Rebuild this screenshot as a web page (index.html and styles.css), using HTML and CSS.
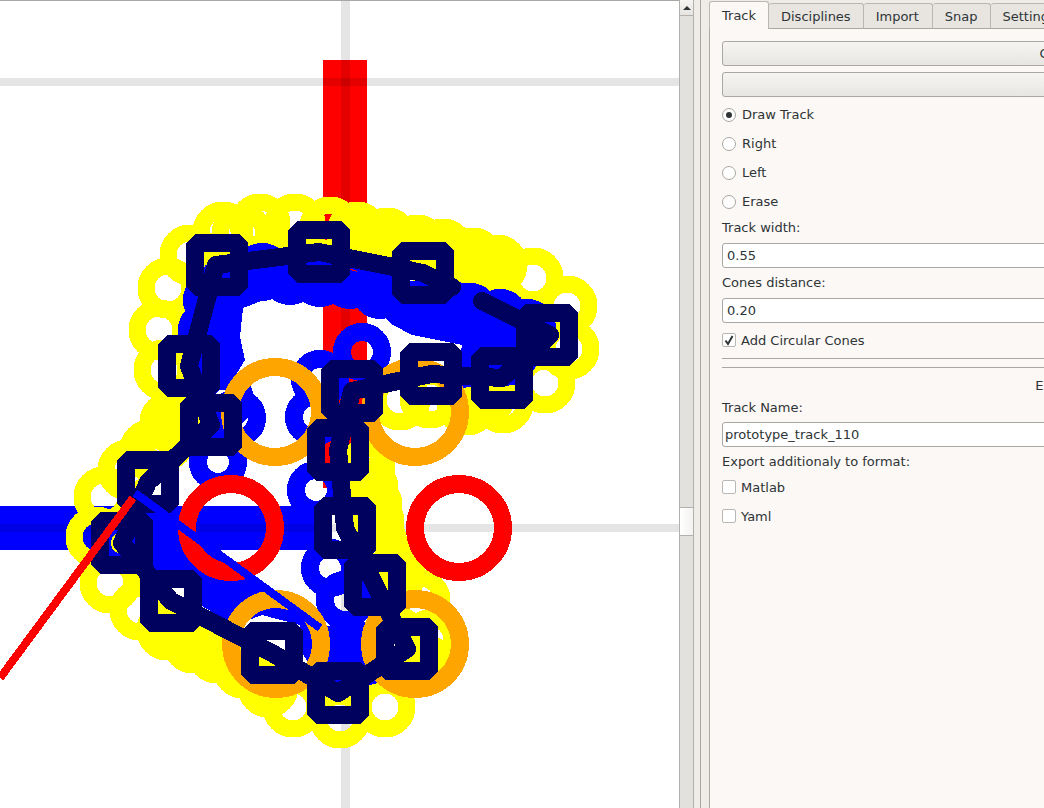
FILE: index.html
```html
<!doctype html>
<html lang="en">
<head>
    <meta charset="UTF-8">
    <meta name="viewport" content="width=device-width, initial-scale=1.0">
    <title>Track editor</title>
    <link rel="stylesheet" href="styles.css">
</head>
<body>
<div class="window">
    <div class="canvas">
        <svg class="track" width="679" height="807" viewBox="0 1 679 807">
            <rect class="start-red" x="323" y="60" width="44" height="428"/>
            <rect class="start-blue" x="-20" y="506" width="343" height="44"/>
            <g class="grid">
                <rect x="341" y="0" width="9" height="808"/>
                <rect x="0" y="78" width="679" height="8"/>
                <rect x="0" y="524" width="679" height="8"/>
            </g>
            <g class="rings yellow">
                <circle cx="190" cy="255" r="22"/>
                <circle cx="223" cy="232" r="22"/>
                <circle cx="242" cy="234" r="22"/>
                <circle cx="260" cy="224" r="22"/>
                <circle cx="295" cy="224" r="22"/>
                <circle cx="330" cy="227" r="22"/>
                <circle cx="357" cy="232" r="22"/>
                <circle cx="372" cy="243" r="22"/>
                <circle cx="387" cy="238" r="22"/>
                <circle cx="402" cy="249" r="22"/>
                <circle cx="417" cy="245" r="22"/>
                <circle cx="430" cy="255" r="22"/>
                <circle cx="443" cy="249" r="22"/>
                <circle cx="458" cy="262" r="22"/>
                <circle cx="473" cy="258" r="22"/>
                <circle cx="485" cy="270" r="22"/>
                <circle cx="497" cy="265" r="22"/>
                <circle cx="533" cy="278" r="22"/>
                <circle cx="567" cy="306" r="22"/>
                <circle cx="569" cy="349" r="22"/>
                <circle cx="545" cy="383" r="22"/>
                <circle cx="503" cy="403" r="22"/>
                <circle cx="485" cy="396" r="22"/>
                <circle cx="467" cy="405" r="22"/>
                <circle cx="430" cy="398" r="22"/>
                <circle cx="400" cy="400" r="22"/>
                <circle cx="365" cy="470" r="22"/>
                <circle cx="368" cy="488" r="22"/>
                <circle cx="372" cy="505" r="22"/>
                <circle cx="374" cy="522" r="22"/>
                <circle cx="376" cy="540" r="22"/>
                <circle cx="385" cy="558" r="22"/>
                <circle cx="395" cy="575" r="22"/>
                <circle cx="420" cy="600" r="22"/>
                <circle cx="430" cy="640" r="22"/>
                <circle cx="425" cy="665" r="22"/>
                <circle cx="385" cy="707" r="22"/>
                <circle cx="340" cy="718" r="22"/>
                <circle cx="293" cy="707" r="22"/>
                <circle cx="268" cy="687" r="22"/>
                <circle cx="255" cy="671" r="22"/>
                <circle cx="243" cy="668" r="22"/>
                <circle cx="230" cy="655" r="22"/>
                <circle cx="217" cy="653" r="22"/>
                <circle cx="205" cy="642" r="22"/>
                <circle cx="193" cy="643" r="22"/>
                <circle cx="180" cy="631" r="22"/>
                <circle cx="167" cy="630" r="22"/>
                <circle cx="140" cy="610" r="22"/>
                <circle cx="110" cy="583" r="22"/>
                <circle cx="96" cy="537" r="22"/>
                <circle cx="104" cy="497" r="22"/>
                <circle cx="128" cy="470" r="22"/>
                <circle cx="150" cy="450" r="22"/>
                <circle cx="165" cy="440" r="22"/>
                <circle cx="185" cy="425" r="22"/>
                <circle cx="170" cy="422" r="22"/>
                <circle cx="180" cy="410" r="22"/>
                <circle cx="164" cy="370" r="22"/>
                <circle cx="159" cy="330" r="22"/>
                <circle cx="168" cy="288" r="22"/>
            </g>
            <polygon class="blue-fill" points="250,256 273,250 350,270 393,281 453,280 487,290 513,297 535,305 550,330 535,368 520,385 455,388 462,345 412,335 393,325 385,318 367,310 330,298 277,295 243,308 240,337 245,360 227,390 200,390 185,337 188,313 196,297 205,265"/>
            <g class="rings blue">
                <circle cx="262" cy="272" r="20"/>
                <circle cx="290" cy="276" r="20"/>
                <circle cx="320" cy="278" r="20"/>
                <circle cx="350" cy="280" r="20"/>
                <circle cx="380" cy="290" r="20"/>
                <circle cx="470" cy="312" r="20"/>
                <circle cx="500" cy="318" r="20"/>
                <circle cx="527" cy="328" r="20"/>
                <circle cx="212" cy="300" r="20"/>
                <circle cx="207" cy="330" r="20"/>
                <circle cx="225" cy="400" r="20"/>
                <circle cx="362" cy="352" r="20"/>
                <circle cx="320" cy="379" r="20"/>
                <circle cx="314" cy="417" r="20"/>
                <circle cx="237" cy="418" r="20"/>
                <circle cx="218" cy="462" r="20"/>
                <circle cx="316" cy="490" r="20"/>
                <circle cx="330" cy="568" r="20"/>
                <circle cx="345" cy="600" r="20"/>
                <circle cx="122" cy="543" r="20"/>
            </g>
            <polygon class="blue-fill" points="153,510 190,540 270,590 320,628 352,620 378,625 378,660 390,680 350,690 320,680 300,650 300,625 262,615 235,625 200,605 190,570 153,570"/>
            <g class="rings orange">
                <circle cx="275" cy="412" r="45"/>
                <circle cx="415" cy="412" r="45"/>
                <circle cx="276" cy="644" r="45"/>
                <circle cx="415" cy="644" r="45"/>
            </g>
            <g class="rings red">
                <circle cx="231" cy="528" r="44"/>
                <circle cx="459" cy="528" r="44"/>
            </g>
            <g class="cones">
                <rect x="195" y="243" width="44" height="44"/>
                <rect x="297" y="230" width="44" height="44"/>
                <rect x="401" y="251" width="44" height="44"/>
                <rect x="525" y="313" width="44" height="44"/>
                <rect x="480" y="356" width="44" height="44"/>
                <rect x="409" y="352" width="44" height="44"/>
                <rect x="330" y="369" width="44" height="44"/>
                <rect x="316" y="428" width="44" height="44"/>
                <rect x="323" y="506" width="44" height="44"/>
                <rect x="353" y="563" width="44" height="44"/>
                <rect x="385" y="627" width="44" height="44"/>
                <rect x="316" y="671" width="44" height="44"/>
                <rect x="250" y="631" width="44" height="44"/>
                <rect x="149" y="579" width="44" height="44"/>
                <rect x="100" y="521" width="44" height="44"/>
                <rect x="126" y="460" width="44" height="44"/>
                <rect x="189" y="403" width="44" height="44"/>
                <rect x="167" y="344" width="44" height="44"/>
            </g>
            <polyline class="spline" points="189,366 216,265 319,252 423,273 452,287"/>
            <polyline class="spline" points="482,301 550,335 502,378 431,374 352,391 338,450 345,528 375,585 407,649 338,693 272,653 171,601 122,543 148,482 211,425 189,366"/>
            <line class="arrow-blue" x1="135" y1="493" x2="320" y2="628"/>
            <line class="arrow-red" x1="133" y1="498" x2="0" y2="678"/>
        </svg>
    </div>
    <div class="scrollbar">
        <div class="scroll-up"><span class="scroll-arrow"></span></div>
        <div class="scroll-thumb"></div>
    </div>
    <div class="gutter"></div>
    <div class="sidebar">
        <div class="tabs">
            <div class="tab active">Track</div>
            <div class="tab">Disciplines</div>
            <div class="tab">Import</div>
            <div class="tab">Snap</div>
            <div class="tab">Settings</div>
        </div>
        <div class="pane">
            <div class="button">Clear</div>
            <div class="button second"></div>
            <div class="option first"><span class="radio checked"></span>Draw Track</div>
            <div class="option"><span class="radio"></span>Right</div>
            <div class="option"><span class="radio"></span>Left</div>
            <div class="option"><span class="radio"></span>Erase</div>
            <div class="label width-label">Track width:</div>
            <div class="field">0.55</div>
            <div class="label">Cones distance:</div>
            <div class="field">0.20</div>
            <div class="check-row circular">
                <span class="checkbox">
                    <svg width="12" height="12" viewBox="0 0 12 12"><path class="tick" d="M2.5 6.5 L5 10 L9.5 2"/></svg>
                </span>Add Circular Cones
            </div>
            <div class="rule"></div>
            <div class="rule lower"></div>
            <div class="heading">Export</div>
            <div class="label name-label">Track Name:</div>
            <div class="field name">prototype_track_110</div>
            <div class="label">Export additionaly to format:</div>
            <div class="check-row matlab"><span class="checkbox"></span>Matlab</div>
            <div class="check-row yaml"><span class="checkbox"></span>Yaml</div>
        </div>
    </div>
</div>
</body>
</html>
```

FILE: styles.css
```css
* {
    box-sizing: border-box;
}
html, body {
    margin: 0;
    padding: 0;
    height: 100%;
    overflow: hidden;
}
body {
    font-family: 'DejaVu Sans', sans-serif;
    font-size: 13px;
    color: #2e3436;
    background: #efebe7;
}
.window {
    display: flex;
    width: 1044px;
    height: 808px;
    overflow: hidden;
}

/* drawing area */
.canvas {
    flex: 0 0 679px;
    height: 808px;
    background: #ffffff;
    border-top: 1px solid #a9a7a3;
}
.track {
    display: block;
    shape-rendering: crispEdges;
}
.start-red {
    fill: #ff0000;
}
.start-blue {
    fill: #0000ff;
}
.grid rect {
    fill: #000000;
    fill-opacity: 0.1;
}
.rings circle {
    fill: none;
}
.rings.yellow circle {
    stroke: #ffff00;
    stroke-width: 17;
}
.rings.blue circle {
    stroke: #0000ff;
    stroke-width: 18;
}
.blue-fill {
    fill: #0000ff;
}
.rings.orange circle {
    stroke: #ffa500;
    stroke-width: 18;
}
.rings.red circle {
    stroke: #ff0000;
    stroke-width: 18;
}
.cones rect {
    fill: none;
    stroke: #00005f;
    stroke-width: 18;
    stroke-linejoin: bevel;
}
.spline {
    fill: none;
    stroke: #00005f;
    stroke-width: 18;
    stroke-linecap: round;
    stroke-linejoin: round;
}
.arrow-blue {
    stroke: #0000ff;
    stroke-width: 8;
}
.arrow-red {
    stroke: #ff0000;
    stroke-width: 8;
}

/* scrollbar */
.scrollbar {
    flex: 0 0 15px;
    height: 808px;
    background: #e3e1dd;
    border-left: 1px solid #b3b1ad;
    border-right: 1px solid #b3b1ad;
    position: relative;
}
.scroll-up {
    height: 16px;
    background: linear-gradient(#f6f5f3, #e6e4e0);
    border-bottom: 1px solid #b3b1ad;
    display: flex;
    justify-content: center;
    padding-top: 6px;
}
.scroll-arrow {
    width: 0;
    height: 0;
    border-left: 4px solid transparent;
    border-right: 4px solid transparent;
    border-bottom: 4px solid #2e3436;
}
.scroll-thumb {
    position: absolute;
    top: 507px;
    left: 0;
    right: 0;
    height: 29px;
    background: linear-gradient(90deg, #ffffff, #f3f2f0);
    border-top: 1px solid #b3b1ad;
    border-bottom: 1px solid #b3b1ad;
}
.gutter {
    flex: 0 0 7px;
    height: 808px;
    border-right: 1px solid #a9a7a3;
}

/* right side */
.sidebar {
    flex: 0 0 702px;
    padding-left: 8px;
    height: 808px;
}
.tabs {
    display: flex;
    height: 29px;
    padding-top: 1px;
    position: relative;
    z-index: 1;
}
.tab {
    height: 26px;
    margin-top: 2px;
    padding: 5px 12px 0;
    background: #e8e5e1;
    border: 1px solid #b9b7b3;
    border-left: 0;
    border-bottom: 1px solid #a9a7a3;
    border-radius: 3px 3px 0 0;
    white-space: nowrap;
}
.tab:nth-child(3) {
    padding-right: 13px;
}
.tab.active {
    height: 28px;
    margin-top: 0;
    padding-top: 6px;
    width: 60px;
    background: #fcf8f5;
    border-left: 1px solid #b9b7b3;
    border-bottom: 0;
}
.pane {
    margin-top: -1px;
    height: 780px;
    padding: 12px 12px 0;
    background: #fcf8f5;
    border-left: 1px solid #a9a7a3;
    border-top: 1px solid #a9a7a3;
}
.button {
    height: 25px;
    line-height: 23px;
    text-align: center;
    border: 1px solid #a9a7a3;
    border-radius: 3px;
    background: linear-gradient(#f6f5f3, #e8e6e2);
}
.button.second {
    margin-top: 6px;
}
.option {
    display: flex;
    align-items: center;
    height: 29px;
}
.option.first {
    margin-top: 3px;
}
.radio {
    position: relative;
    width: 14px;
    height: 14px;
    margin-right: 6px;
    border: 1px solid #a9a7a3;
    border-radius: 50%;
    background: #ffffff;
}
.radio.checked::after {
    content: "";
    position: absolute;
    top: 3px;
    left: 3px;
    width: 6px;
    height: 6px;
    border-radius: 50%;
    background: #2e3436;
}
.label {
    height: 18px;
    line-height: 18px;
    margin-top: 6px;
}
.label.width-label {
    margin-top: 3px;
}
.field {
    height: 25px;
    line-height: 23px;
    margin-top: 6px;
    padding-left: 4px;
    background: #ffffff;
    border: 1px solid #a9a7a3;
    border-radius: 3px;
}
.field.name {
    padding-left: 2px;
    margin-top: 5px;
}
.check-row {
    display: flex;
    align-items: center;
    height: 14px;
}
.check-row.circular {
    margin-top: 10px;
}
.check-row.matlab {
    margin-top: 9px;
}
.check-row.yaml {
    margin-top: 15px;
}
.checkbox {
    width: 14px;
    height: 14px;
    margin-right: 5px;
    background: #ffffff;
    border: 1px solid #b9b7b3;
    border-radius: 2px;
}
.checkbox svg {
    display: block;
    margin: 0;
}
.tick {
    fill: none;
    stroke: #2e3436;
    stroke-width: 2;
}
.rule {
    height: 1px;
    margin-top: 11px;
    background: #a9a7a3;
}
.rule.lower {
    margin-top: 8px;
}
.heading {
    height: 18px;
    line-height: 18px;
    margin-top: 9px;
    text-align: center;
}
.name-label {
    margin-top: 4px;
}
```
